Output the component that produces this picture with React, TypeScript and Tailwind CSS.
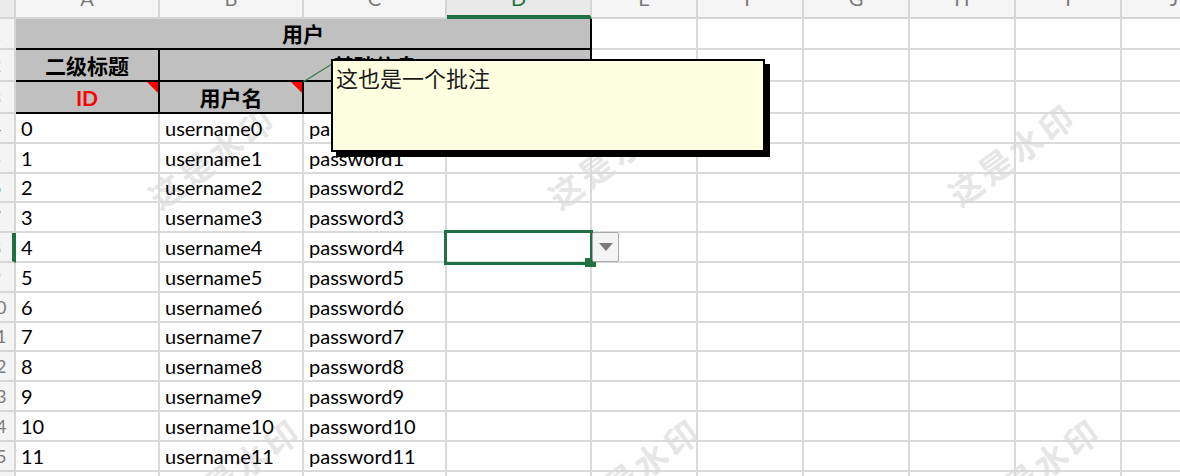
import React from 'react'

const letters = ['A', 'B', 'C', 'D', 'E', 'F', 'G', 'H', 'I', 'J']
const dataRows = Array.from({ length: 13 }, (_, i) => i)

const gridLine = 'border-r-2 border-b-2 border-[#dadada]'
const headCell =
  'bg-[#c0c0c0] border-r-2 border-b-2 border-black flex items-center justify-center font-bold text-[21px] leading-none'
const dataCell = `${gridLine} pl-[5px] flex items-end pb-[4px] text-[20px] leading-none whitespace-nowrap overflow-hidden`
const mark =
  'absolute -z-10 w-[180px] h-[44px] flex items-center justify-center rotate-[-36deg] text-[33px] font-bold tracking-[4px] text-[#e6e6e6] whitespace-nowrap'

const RowHead = ({ n, active = false }: { n: number; active?: boolean }) => (
  <div
    className={`bg-[#f4f4f4] border-b-2 border-[#d6d6d6] overflow-hidden flex items-center ${
      active ? 'border-r-4 border-r-[#1f7145]' : 'border-r-2'
    }`}
  >
    <div className="w-[30px] ml-[-19px] shrink-0 text-center text-[18px] leading-none text-[#7a7a7a]">{n}</div>
  </div>
)

const ColHead = ({ l }: { l: string }) =>
  l === 'D' ? (
    <div className="bg-[#e9e9e9] border-r-2 border-b-4 border-[#d6d6d6] border-b-[#1f7145] overflow-hidden flex justify-center items-start">
      <span className="mt-[-12px] text-[20px] leading-none text-[#1f7145]">{l}</span>
    </div>
  ) : (
    <div className="bg-[#f5f5f5] border-r-2 border-b-2 border-[#d6d6d6] overflow-hidden flex justify-center items-start">
      <span className="mt-[-12px] text-[20px] leading-none text-[#7a7a7a]">{l}</span>
    </div>
  )

const Empty = ({ count }: { count: number }) => (
  <>
    {Array.from({ length: count }, (_, i) => (
      <div key={i} className={gridLine} />
    ))}
  </>
)

// red comment marker in the top right corner of a cell
const Marker = () => (
  <span className="absolute right-0 top-0 w-0 h-0 border-t-[11px] border-t-[#ff0000] border-l-[11px] border-l-transparent" />
)

const Watermarks = () => (
  <>
    <div className={`${mark} left-[123px] top-[136px]`}>这是水印</div>
    <div className={`${mark} left-[523px] top-[136px]`}>这是水印</div>
    <div className={`${mark} left-[923px] top-[133px]`}>这是水印</div>
    <div className={`${mark} left-[148px] top-[448px]`}>这是水印</div>
    <div className={`${mark} left-[548px] top-[448px]`}>这是水印</div>
    <div className={`${mark} left-[948px] top-[448px]`}>这是水印</div>
  </>
)

const App = () => {
  return (
    <div className="relative isolate w-[1180px] h-[476px] overflow-hidden bg-white text-black font-[Lato,Noto_Sans_CJK_SC,sans-serif]">
      <Watermarks />

      <div className="grid grid-cols-[16px_144px_144px_143px_145px_106px_106px_106px_106px_106px_106px] grid-rows-[19px_31px_32px_32px_repeat(13,29.8px)]">
        <div className="bg-[#ececec] border-r-2 border-b-2 border-[#d6d6d6]" />
        {letters.map((l) => (
          <ColHead key={l} l={l} />
        ))}

        <RowHead n={1} />
        <div className={`col-span-4 ${headCell}`}>用户</div>
        <Empty count={6} />

        <RowHead n={2} />
        <div className={headCell}>二级标题</div>
        <div className={`col-span-3 ${headCell}`}>基础信息</div>
        <Empty count={6} />

        <RowHead n={3} />
        <div className={`${headCell} relative text-[#ff0000] text-[20px]`}>
          ID
          <Marker />
        </div>
        <div className={`${headCell} relative`}>
          用户名
          <Marker />
        </div>
        <div className={headCell}>密码</div>
        <div className={headCell} />
        <Empty count={6} />

        {dataRows.map((i) => (
          <React.Fragment key={i}>
            <RowHead n={i + 4} active={i === 4} />
            <div className={dataCell}>{i}</div>
            <div className={dataCell}>username{i}</div>
            <div className={dataCell}>password{i}</div>
            <Empty count={7} />
          </React.Fragment>
        ))}
      </div>

      {/* selected cell D8 with its list button */}
      <div className="absolute left-[444px] top-[230px] w-[149px] h-[35px] border-[3px] border-[#1f7145]" />
      <div className="absolute left-[585px] top-[258px] w-[11px] h-[9px] bg-[#1f7145]" />
      <div className="absolute left-[592px] top-[232px] w-[27px] h-[30px] border border-[#a8a8a8] rounded-[2px] bg-[#f4f4f4] flex items-center justify-center">
        <span className="w-0 h-0 border-l-[7px] border-r-[7px] border-t-[8px] border-l-transparent border-r-transparent border-t-[#7b7b7b]" />
      </div>

      {/* comment */}
      <svg className="absolute left-[300px] top-[60px]" width="36" height="26" viewBox="0 0 36 26">
        <line x1="3" y1="22" x2="32" y2="4" stroke="#3a7d55" strokeWidth="1.4" />
      </svg>
      <div className="absolute left-[331px] top-[59px] w-[434px] h-[93px] border-2 border-black bg-[#ffffe1] shadow-[5px_5px_0_#000] pl-[3px] pt-[5px] text-[22px] leading-[1.2] text-[#1a1a1a]">
        这也是一个批注
      </div>
    </div>
  )
}

export default App
